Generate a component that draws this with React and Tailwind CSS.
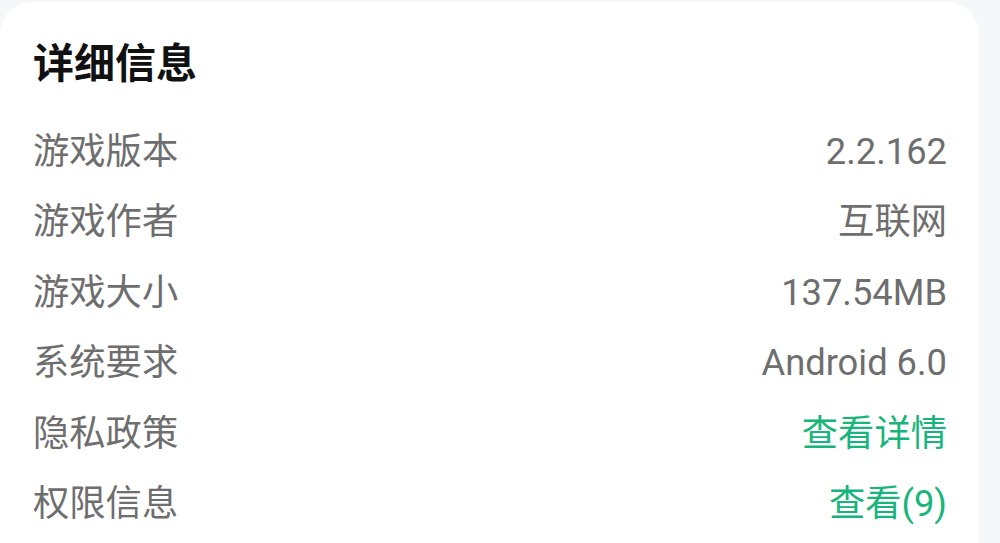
import React from 'react';

const rows = [
  { label: '游戏版本', value: '2.2.162' },
  { label: '游戏作者', value: '互联网' },
  { label: '游戏大小', value: '137.54MB' },
  { label: '系统要求', value: 'Android 6.0' },
  { label: '隐私政策', value: '查看详情', link: true },
  { label: '权限信息', value: '查看(9)', link: true },
];

export default function App() {
  return (
    <div
      className="w-[1000px] h-[543px] overflow-hidden bg-[#f6f7f9]"
      style={{ fontFamily: 'Roboto, "Noto Sans CJK SC", sans-serif' }}
    >
      <div className="mt-[2px] w-[979px] h-[600px] bg-white rounded-t-[32px] pl-[33px] pr-[32px] pt-[38px]">
        <h2 className="text-[41px] leading-[48px] font-bold text-[#111111]">详细信息</h2>
        <div className="mt-[29px]">
          {rows.map((row) => (
            <div key={row.label} className="h-[70.4px] flex items-center justify-between text-[36.3px]">
              <span className="text-[#6e6e6e]">{row.label}</span>
              <span className={row.link ? 'text-[#17b57a]' : 'text-[#6e6e6e]'}>{row.value}</span>
            </div>
          ))}
        </div>
      </div>
    </div>
  );
}
